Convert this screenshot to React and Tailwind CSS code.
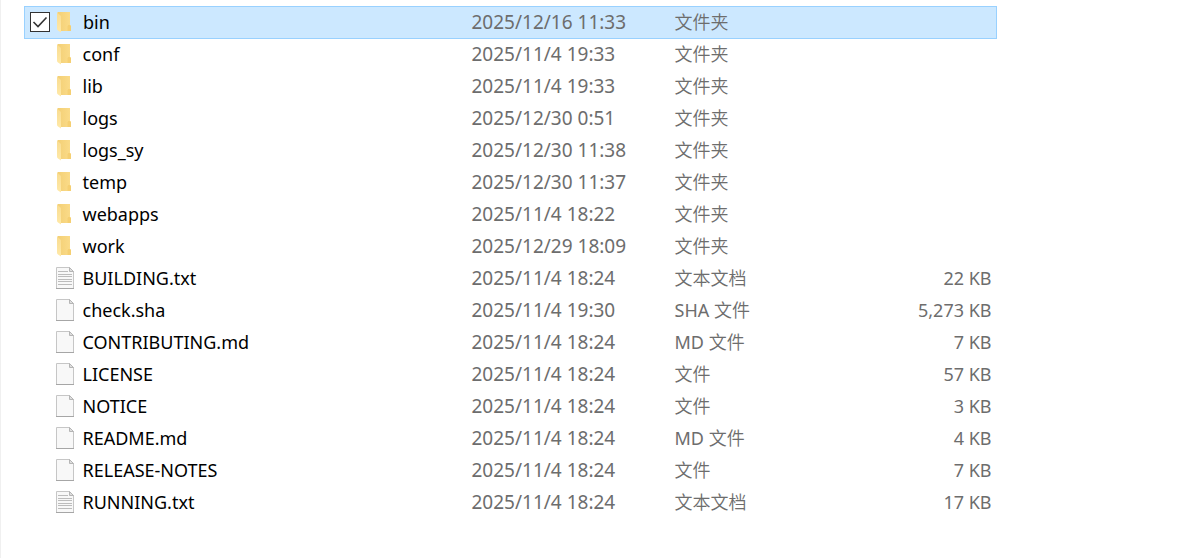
import { useState } from 'react';
import { clsx } from 'clsx';

const FILES = [
    { name: 'bin', modified: '2025/12/16 11:33', type: '文件夹', kind: 'folder' },
    { name: 'conf', modified: '2025/11/4 19:33', type: '文件夹', kind: 'folder' },
    { name: 'lib', modified: '2025/11/4 19:33', type: '文件夹', kind: 'folder' },
    { name: 'logs', modified: '2025/12/30 0:51', type: '文件夹', kind: 'folder' },
    { name: 'logs_sy', modified: '2025/12/30 11:38', type: '文件夹', kind: 'folder' },
    { name: 'temp', modified: '2025/12/30 11:37', type: '文件夹', kind: 'folder' },
    { name: 'webapps', modified: '2025/11/4 18:22', type: '文件夹', kind: 'folder' },
    { name: 'work', modified: '2025/12/29 18:09', type: '文件夹', kind: 'folder' },
    { name: 'BUILDING.txt', modified: '2025/11/4 18:24', type: '文本文档', kind: 'text', size: '22 KB' },
    { name: 'check.sha', modified: '2025/11/4 19:30', type: 'SHA 文件', kind: 'file', size: '5,273 KB' },
    { name: 'CONTRIBUTING.md', modified: '2025/11/4 18:24', type: 'MD 文件', kind: 'file', size: '7 KB' },
    { name: 'LICENSE', modified: '2025/11/4 18:24', type: '文件', kind: 'file', size: '57 KB' },
    { name: 'NOTICE', modified: '2025/11/4 18:24', type: '文件', kind: 'file', size: '3 KB' },
    { name: 'README.md', modified: '2025/11/4 18:24', type: 'MD 文件', kind: 'file', size: '4 KB' },
    { name: 'RELEASE-NOTES', modified: '2025/11/4 18:24', type: '文件', kind: 'file', size: '7 KB' },
    { name: 'RUNNING.txt', modified: '2025/11/4 18:24', type: '文本文档', kind: 'text', size: '17 KB' },
];

const FolderIcon = () => (
    <svg width="20" height="24" viewBox="0 0 20 24" aria-hidden="true">
        <defs>
            <linearGradient id="folder-flap" x1="0" y1="0" x2="0" y2="1">
                <stop offset="0" stopColor="#f9dc90" />
                <stop offset="1" stopColor="#ffe9a8" />
            </linearGradient>
            <linearGradient id="folder-back" x1="0" y1="0" x2="1" y2="0">
                <stop offset="0" stopColor="#f3cf75" />
                <stop offset="1" stopColor="#fbdc8a" />
            </linearGradient>
        </defs>
        <path d="M2.5 2H15v13l1 1v5H5z" fill="url(#folder-back)" />
        <path d="M12.5 16l.8-1H15l1 1v5h-3.5z" fill="#f5cf72" />
        <path d="M2 2.5L6 6v16.5L3 20.5Q2 20 2 18.5z" fill="url(#folder-flap)" />
    </svg>
);

const FileIcon = ({ lined }) => (
    <svg width="20" height="24" viewBox="0 0 20 24" aria-hidden="true">
        <path d="M1.5 1.5h13l4 4v17h-17z" fill="#f8f8f8" stroke="#c6c6c6" />
        <path d="M1 22.5h18" stroke="#a6a6a6" />
        <path d="M14.5 1.5v4h4z" fill="#dedede" stroke="#b5b5b5" />
        {lined && (
            <path
                d="M3 5.5h10M3 8.5h14M3 10.5h14M3 13.5h14M3 15.5h14M3 18.5h14"
                stroke="#bcbcbc"
            />
        )}
    </svg>
);

const SelectBox = ({ name, checked, onChange }) => (
    <span className="grid size-5 shrink-0">
        <input
            type="checkbox"
            aria-label={name}
            checked={checked}
            onChange={onChange}
            className={clsx(
                'peer col-start-1 row-start-1 size-5 appearance-none border border-[#333] bg-white',
                !checked && 'opacity-0 hover:opacity-100'
            )}
        />
        <svg
            viewBox="0 0 20 20"
            className="pointer-events-none col-start-1 row-start-1 size-5 opacity-0 peer-checked:opacity-100"
            aria-hidden="true"
        >
            <path d="M3.5 10l4.5 4.5L16.5 5.5" fill="none" stroke="#333" strokeWidth="1.6" />
        </svg>
    </span>
);

const App = () => {
    const [selected, setSelected] = useState(['bin']);

    const toggle = (name) => {
        setSelected(prev => (prev.includes(name) ? prev.filter(n => n !== name) : [...prev, name]));
    };

    return (
        <main className="min-h-screen border-l border-[#f0f0f0] bg-white pt-1.5 pl-[23px] font-['Noto_Sans','Noto_Sans_CJK_SC_DemiLight','Noto_Sans_CJK_SC',sans-serif] text-lg leading-6 text-[#6d6d6d]">
            <table className="w-full max-w-[973px] table-fixed border-collapse whitespace-nowrap">
                <colgroup>
                    <col className="w-[447px]" />
                    <col className="w-[203px]" />
                    <col className="w-[176px]" />
                    <col />
                </colgroup>
                <tbody>
                    {FILES.map(({ name, modified, type, kind, size }) => {
                        const isSelected = selected.includes(name);
                        return (
                            <tr
                                key={name}
                                className={clsx('h-8', isSelected && 'border border-[#99d1ff] bg-[#cce8ff]')}
                            >
                                <td className="p-0 pb-0.5 pl-[5px]">
                                    <div className="flex items-center">
                                        <SelectBox name={name} checked={isSelected} onChange={() => toggle(name)} />
                                        <span className="mr-2 ml-[5px] shrink-0">
                                            {kind === 'folder' ? <FolderIcon /> : <FileIcon lined={kind === 'text'} />}
                                        </span>
                                        <span className="text-black">{name}</span>
                                    </div>
                                </td>
                                <td className="p-0 pb-0.5 text-[19px]">{modified}</td>
                                <td className="p-0 pb-0.5">{type}</td>
                                <td className="p-0 pr-[5px] pb-0.5 text-right">{size}</td>
                            </tr>
                        );
                    })}
                </tbody>
            </table>
        </main>
    );
};

export default App;
